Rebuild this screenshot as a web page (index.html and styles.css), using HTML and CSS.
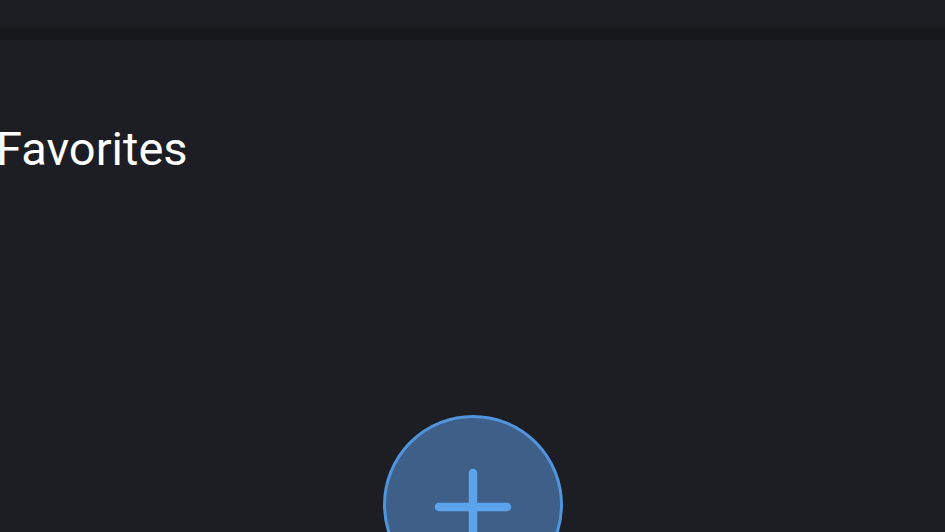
FILE: index.html
```html
<!DOCTYPE HTML>
<html>
    <head>
        <title>Favorites</title>
        <meta charset="utf-8" />
        <meta name="viewport" content="width=device-width, initial-scale=1" />
        <link rel="stylesheet" href="styles.css">
    </head>
    <body>
        <div id="app">
            <div class="top-bar"></div>
            <div class="divider"></div>
            <div class="content">
                <h1 class="title">Favorites</h1>
                <div class="add-wrap">
                    <button class="add-btn" aria-label="Add favorite">
                        <svg class="plus" width="84" height="84" viewBox="0 0 84 84">
                            <path d="M42 8 V76 M8 42 H76" stroke="#5ba3ea" stroke-width="8.5" stroke-linecap="round" fill="none"/>
                        </svg>
                    </button>
                </div>
            </div>
        </div>
    </body>
</html>
```

FILE: styles.css
```css
html, body {
    margin: 0;
    padding: 0;
    height: 100%;
    overflow: hidden;
}

body {
    font-family: Roboto, 'Noto Sans', sans-serif;
    background-color: #1c1e23;
    color: #fff;
}

.top-bar {
    height: 25px;
    background-color: #1c1e23;
}

.divider {
    height: 15px;
    background: linear-gradient(#1b1d21, #16181b 6px);
}

.content {
    padding-top: 81px;
}

.title {
    margin: 0 0 0 -4px;
    font-size: 47px;
    font-weight: 400;
    line-height: 55px;
}

.add-wrap {
    display: flex;
    justify-content: center;
    margin-top: 239px;
}

.add-btn {
    width: 180px;
    height: 180px;
    margin-left: 1px;
    border-radius: 50%;
    border: 3px solid #4f94dc;
    background-color: #3e5f87;
    padding: 0;
    display: flex;
    align-items: center;
    justify-content: center;
    cursor: pointer;
}

.plus {
    margin-top: 3px;
}
```
